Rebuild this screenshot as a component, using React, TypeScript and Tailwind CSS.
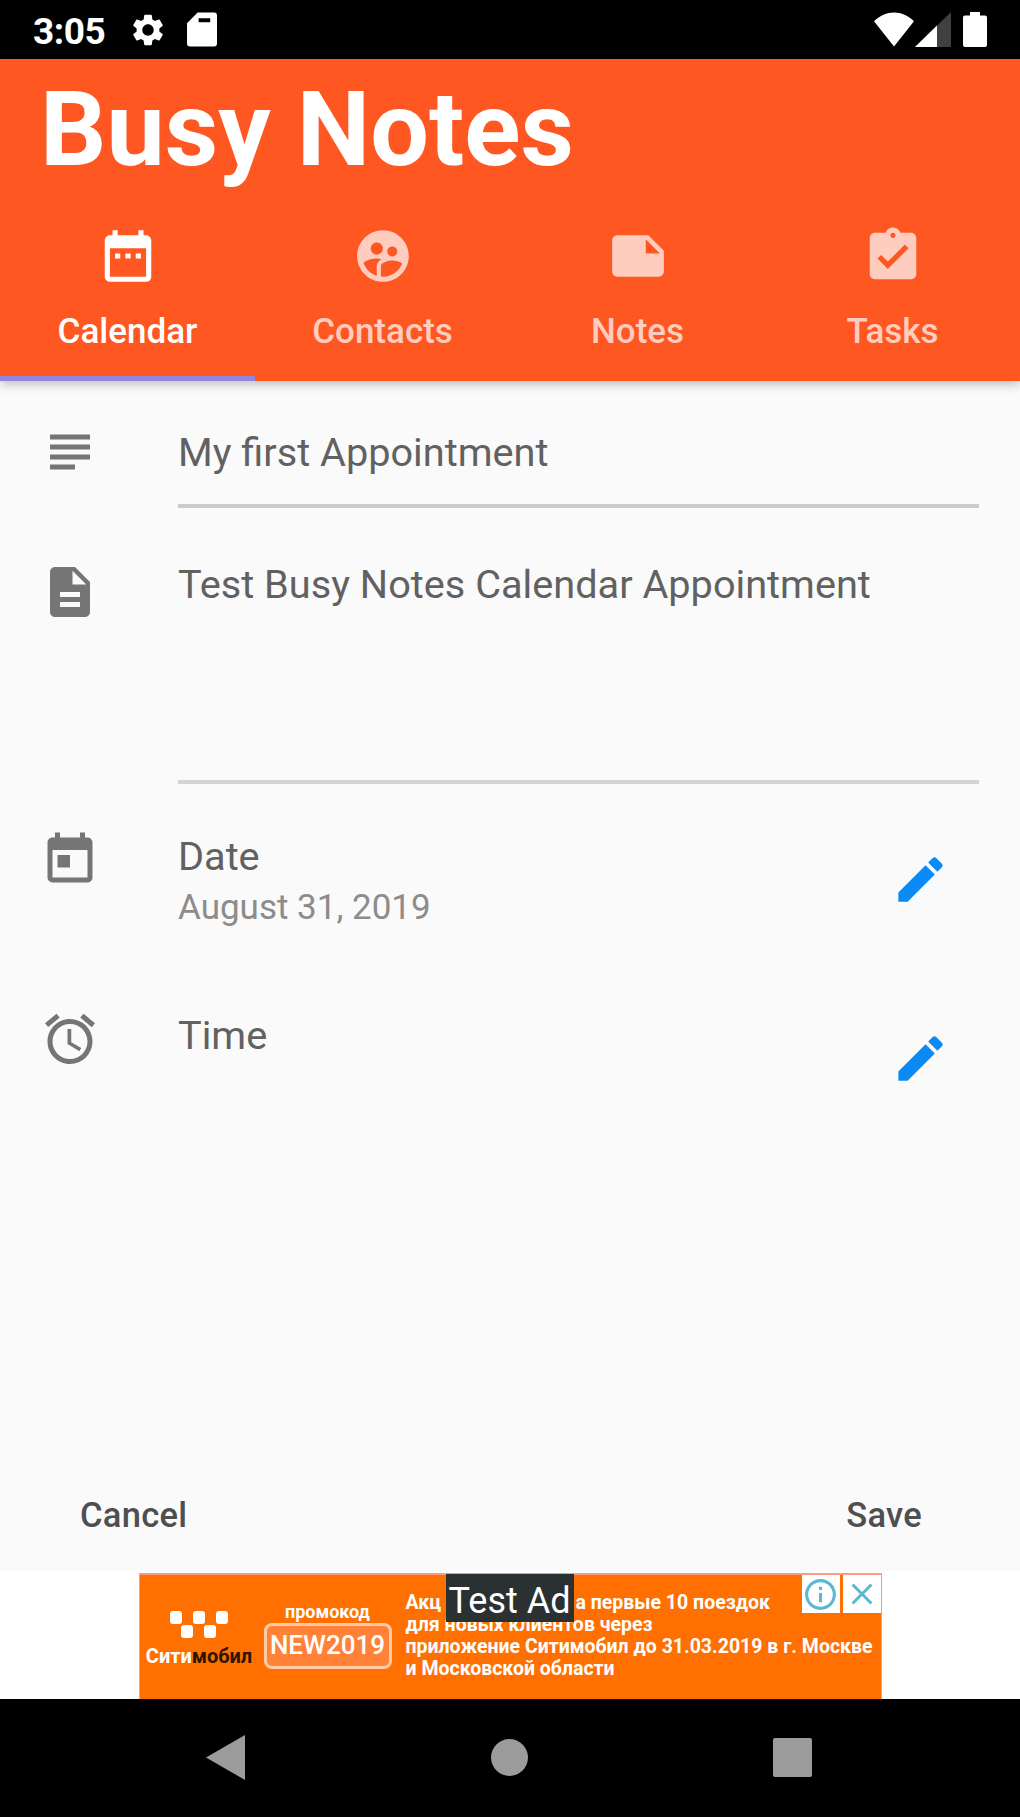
import type { ReactNode } from 'react'
import type { IconType } from 'react-icons'
import {
  MdAlarm,
  MdAssignmentTurnedIn,
  MdClose,
  MdDateRange,
  MdDescription,
  MdEdit,
  MdInfoOutline,
  MdNote,
  MdSettings,
  MdSubject,
  MdSupervisedUserCircle,
  MdToday,
} from 'react-icons/md'

const TABS: { label: string; icon: IconType }[] = [
  { label: 'Calendar', icon: MdDateRange },
  { label: 'Contacts', icon: MdSupervisedUserCircle },
  { label: 'Notes', icon: MdNote },
  { label: 'Tasks', icon: MdAssignmentTurnedIn },
]

function StatusBar() {
  return (
    <div className="flex h-[59px] items-center bg-black pl-[33px] pr-[33px] text-white">
      <span className="w-[73px] pt-[3px] text-[37px] font-bold leading-none tracking-[-0.5px]">3:05</span>
      <MdSettings className="ml-[23px] size-[38px]" />
      <svg className="ml-[20px] h-[35px] w-[30px]" viewBox="0 0 31 35" fill="currentColor">
        <path
          fillRule="evenodd"
          d="M11 0H28a3 3 0 0 1 3 3v29a3 3 0 0 1-3 3H3a3 3 0 0 1-3-3V11ZM12 6v4h12V6Z"
        />
      </svg>
      <div className="ml-auto flex items-center">
        <svg className="h-[35px] w-[40px]" viewBox="0 0 41 35" fill="currentColor">
          <path d="M20.500 35 0 9C6 3 13 0 20.500 0S35 3 41 9Z" />
        </svg>
        <svg className="ml-px h-[35px] w-[36px]" viewBox="0 0 36 35" fill="currentColor">
          <path d="M36 0v35H0Z" opacity="0.25" />
          <path d="M22 13.600V35H0Z" />
        </svg>
        <svg className="ml-3 h-[35px] w-[24px]" viewBox="0 0 24 35" fill="currentColor">
          <path d="M7 3.500V0h10v3.500h5a2 2 0 0 1 2 2V33a2 2 0 0 1-2 2H2a2 2 0 0 1-2-2V5.500a2 2 0 0 1 2-2Z" />
        </svg>
      </div>
    </div>
  )
}

function Header() {
  return (
    <header className="relative z-10 flex h-[322px] flex-col bg-[#ff5722] shadow-[0_3px_10px_rgba(0,0,0,0.25)]">
      <h1 className="mt-[11px] pl-[40px] text-[104px] font-bold leading-[120px] tracking-[0.1px] text-white">
        Busy Notes
      </h1>
      <nav className="grid h-[191px] grid-cols-4">
        {TABS.map(({ label, icon: Icon }, i) => (
          <button
            key={label}
            className={
              i === 0
                ? 'flex flex-col items-center border-b-[5px] border-[#9583e0] pt-[35px] text-white'
                : 'flex flex-col items-center border-b-[5px] border-transparent pt-[35px] text-[#ffcdbf]'
            }
          >
            <Icon className="size-[62px]" />
            <span className="mt-[24px] text-[35px] font-medium leading-[42px]">{label}</span>
          </button>
        ))}
      </nav>
    </header>
  )
}

function FormRow({ icon: Icon, className, children }: { icon: IconType; className: string; children: ReactNode }) {
  return (
    <div className={`flex pl-[40px] pr-[41px] ${className}`}>
      <Icon className="mt-[2px] size-[60px] shrink-0 text-[#757575]" />
      <div className="ml-[78px] flex flex-1">{children}</div>
    </div>
  )
}

function PickerRow({ icon, label, value }: { icon: IconType; label: string; value?: string }) {
  return (
    <FormRow icon={icon} className="h-[179px]">
      <div className="flex-1 pt-[4px]">
        <div className="text-[39.700px] leading-[50px] text-[#616161]">{label}</div>
        {value && <div className="pt-px text-[35px] leading-[50px] text-[#8c8c8c]">{value}</div>}
      </div>
      <button className="mr-[29px] mt-[22px] size-[59px] text-[#0a8af5]">
        <MdEdit className="size-full" />
      </button>
    </FormRow>
  )
}

function AdBanner() {
  return (
    <div className="flex h-[128px] justify-center bg-white pt-[2px]">
      <div className="relative flex h-[126px] w-[743px] border-x border-t-2 border-[#ff9a80] bg-[#ff7000] text-white">
        <div className="flex w-[119px] flex-col items-center pt-[36px]">
          <svg className="h-[27px] w-[58px]" viewBox="0 0 58 27" fill="currentColor">
            <rect x="0" y="0" width="12" height="13" rx="3" />
            <rect x="23" y="0" width="12" height="13" rx="3" />
            <rect x="46" y="0" width="12" height="13" rx="3" />
            <rect x="11" y="14" width="12" height="13" rx="3" />
            <rect x="34" y="14" width="12" height="13" rx="3" />
          </svg>
          <div className="mt-[6px] text-[20px] font-bold leading-[24px]">
            Сити<span className="text-[#2b1600]">мобил</span>
          </div>
        </div>
        <div className="ml-[5px] flex w-[128px] flex-col items-center pt-[26px]">
          <div className="text-[18px] font-bold leading-[22px]">промокод</div>
          <div className="h-[46px] w-full rounded-lg border-[3px] border-[#ffc9a6] bg-[#ff8238] text-center text-[26px] font-medium leading-[39px]">
            NEW2019
          </div>
        </div>
        <div className="ml-[14px] whitespace-nowrap pt-[17px] text-[19.500px] font-bold leading-[22px]">
          {/* the middle of the first line sits under the "Test Ad" label */}
          <div className="flex">
            <span className="w-[170px]">Акц</span>
            <span>а первые 10 поездок</span>
          </div>
          <div>для новых клиентов через</div>
          <div>приложение Ситимобил до 31.03.2019 в г. Москве</div>
          <div>и Московской области</div>
        </div>
        <div className="absolute left-[306px] top-[-1px] h-[48px] w-[128px] bg-[#2b3033] text-center text-[36px] leading-[54px]">
          Test Ad
        </div>
        <div className="absolute right-0 top-0 flex gap-[3px] text-[#5bb8d3]">
          <div className="flex size-[38px] items-center justify-center bg-white">
            <MdInfoOutline className="size-[37px]" />
          </div>
          <div className="flex size-[38px] items-center justify-center bg-white">
            <MdClose className="size-[36px]" />
          </div>
        </div>
      </div>
    </div>
  )
}

function NavBar() {
  return (
    <div className="flex h-[118px] items-center justify-between bg-black pb-[2px] pl-[206px] pr-[208px] text-[#9b9b9b]">
      <svg className="h-[45px] w-[39px]" viewBox="0 0 40 46" fill="currentColor">
        <path d="M40 0v46L0 23Z" />
      </svg>
      <div className="size-[37px] rounded-full bg-current" />
      <div className="size-[39px] rounded-xs bg-current" />
    </div>
  )
}

export default function App() {
  return (
    <div className="flex h-[1817px] w-[1020px] flex-col bg-[#fafafa] font-[Roboto,sans-serif]">
      <StatusBar />
      <Header />
      <main className="flex flex-1 flex-col pt-[39px]">
        <FormRow icon={MdSubject} className="h-[140px]">
          <div className="h-[88px] flex-1 border-b-[4px] border-[#cccccc] pt-[10px] text-[39.700px] leading-[46px] text-[#616161]">
            My first Appointment
          </div>
        </FormRow>
        <FormRow icon={MdDescription} className="h-[268px]">
          <div className="h-[224px] flex-1 border-b-[4px] border-[#d4d4d4] text-[39.700px] leading-[50px] text-[#616161]">
            Test Busy Notes Calendar Appointment
          </div>
        </FormRow>
        <PickerRow icon={MdToday} label="Date" value="August 31, 2019" />
        <PickerRow icon={MdAlarm} label="Time" />
        <div className="mt-auto flex h-[112px] justify-between pl-[80px] pr-[98px] text-[34.500px] font-medium leading-[60px] tracking-[0.3px] text-[#4f4f4f]">
          <button className="self-start pt-[26px]">Cancel</button>
          <button className="self-start pt-[26px]">Save</button>
        </div>
      </main>
      <AdBanner />
      <NavBar />
    </div>
  )
}
